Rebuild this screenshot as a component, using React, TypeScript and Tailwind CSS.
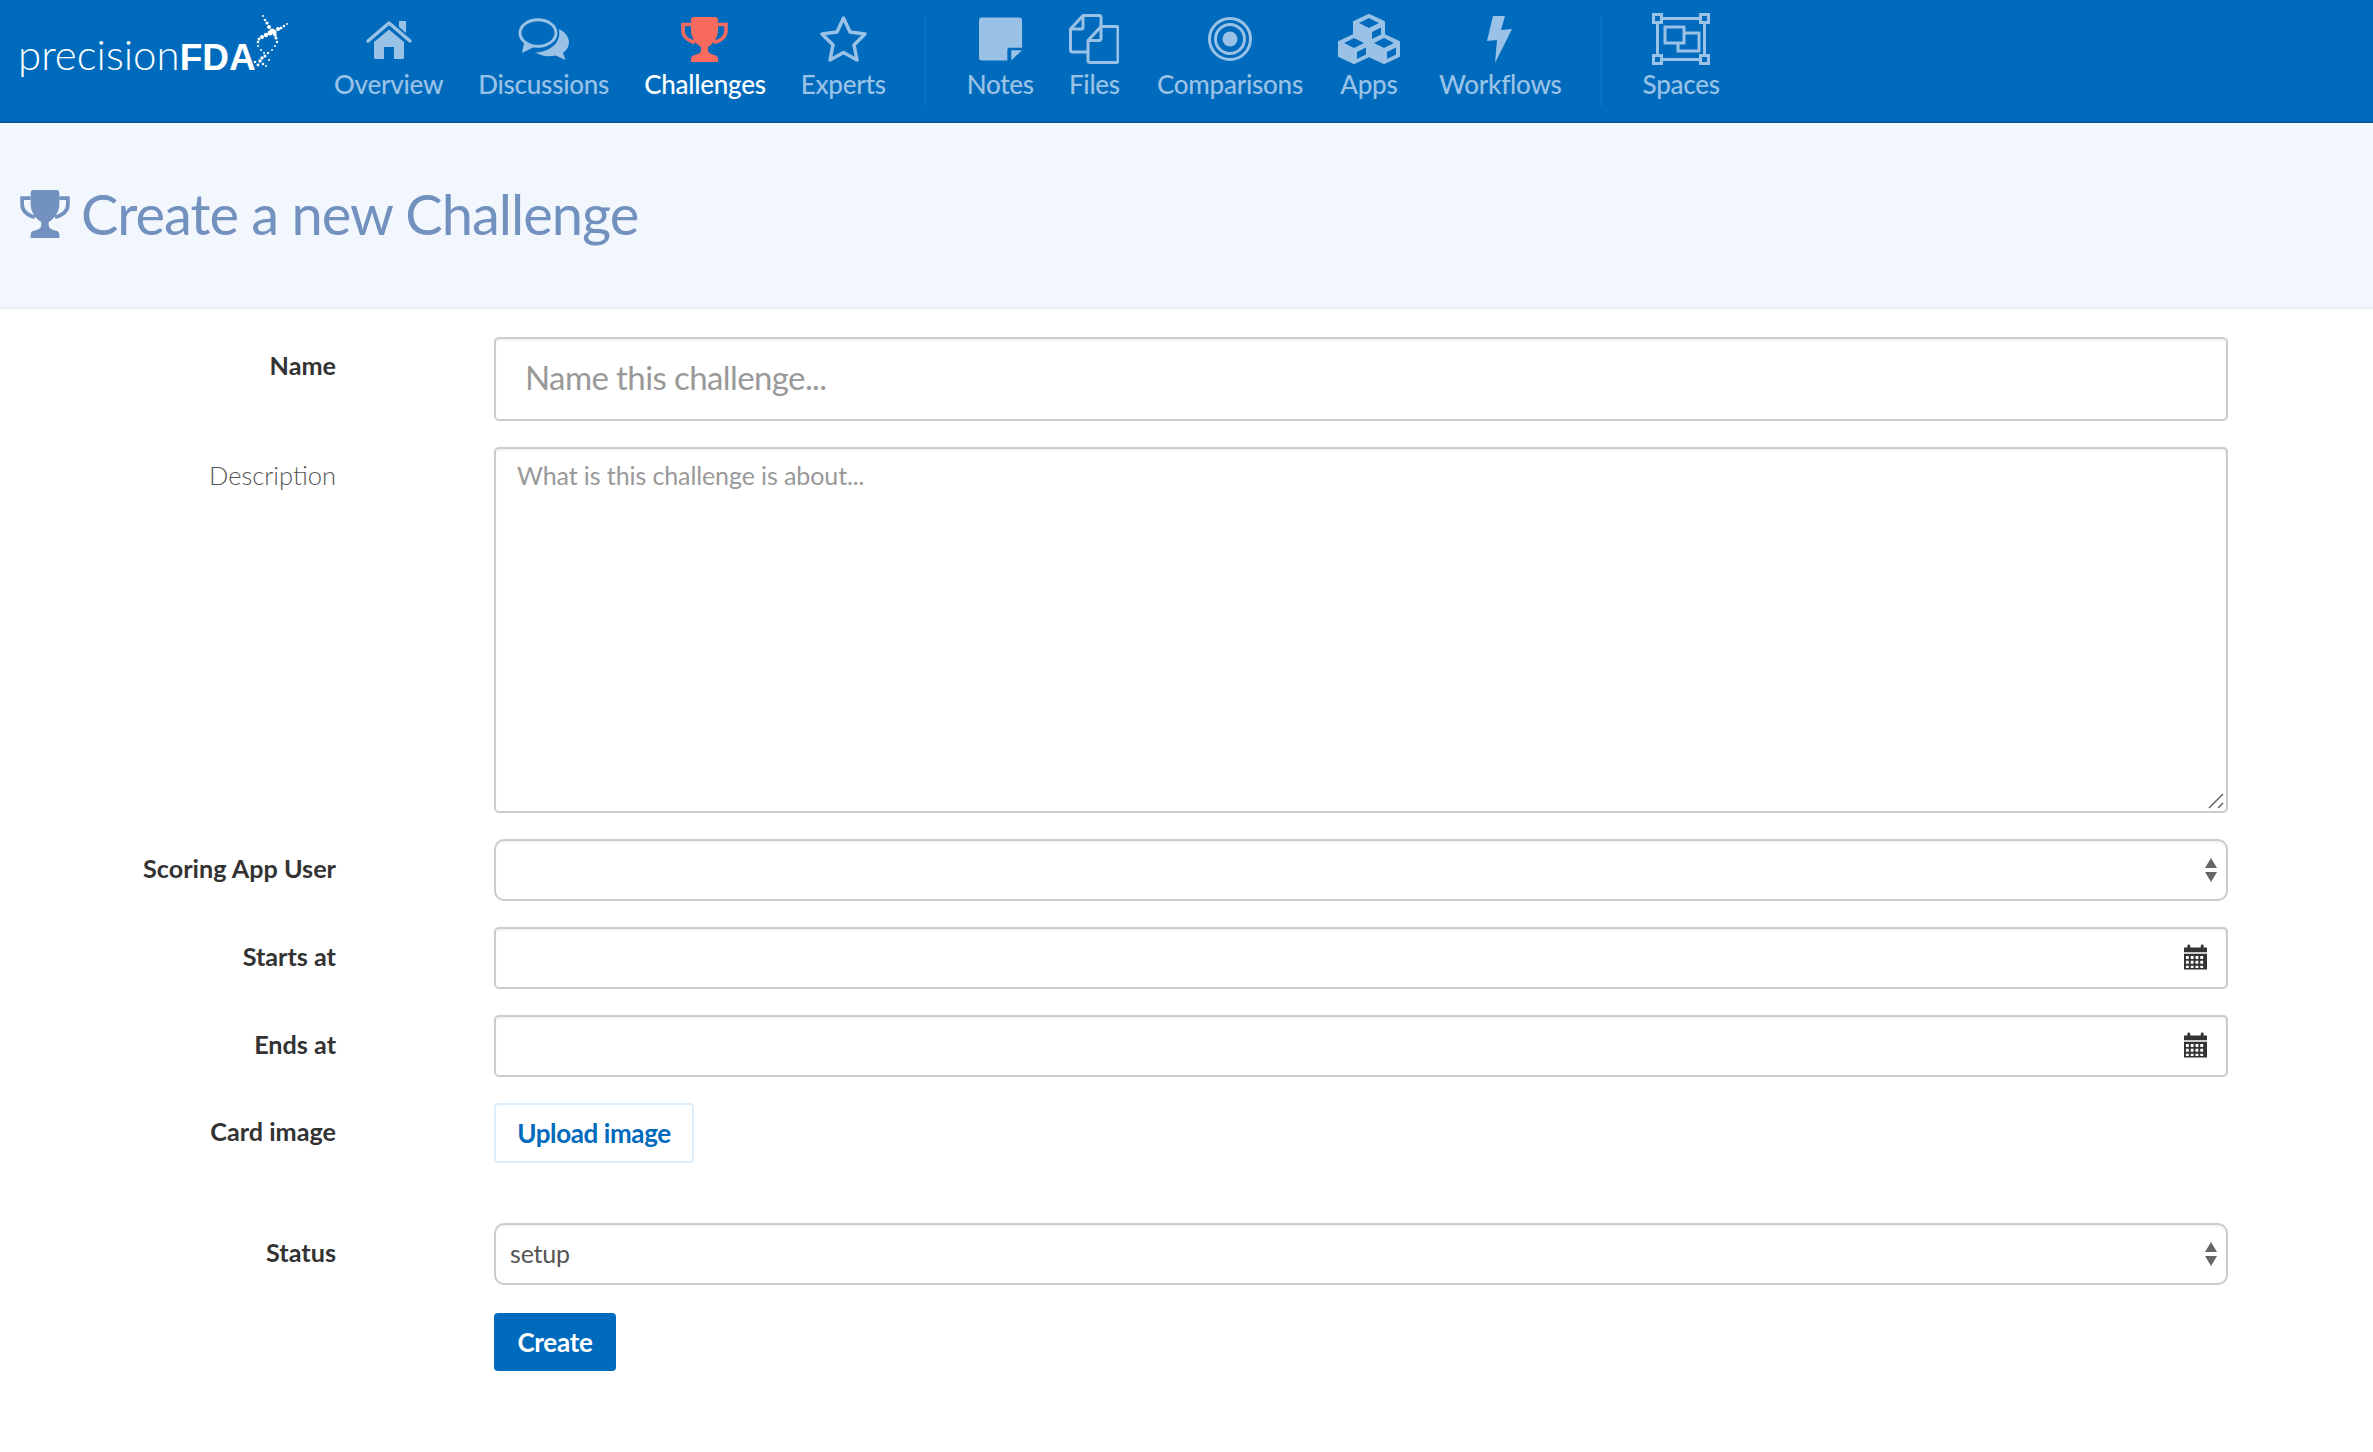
import * as React from "react";

const font = "font-['Lato','Liberation_Sans',sans-serif]";

function Home() {
  return (
    <svg viewBox="0 0 46 39" className="h-[39px] w-[46px]" fill="currentColor">
      <path d="M33 1h7v12l-7-6z" />
      <path d="M2 21 23 3l21 18" fill="none" stroke="currentColor" strokeWidth="3.500" strokeLinecap="round" strokeLinejoin="round" />
      <path d="M23 9.500 38 22v15.500a1.500 1.500 0 0 1-1.500 1.500H28V27H18v12H9.500A1.500 1.500 0 0 1 8 37.500V22z" />
    </svg>
  );
}

function Discussions() {
  return (
    <svg viewBox="0 0 51 42" className="h-[42px] w-[51px]" fill="currentColor">
      <ellipse cx="20" cy="15" rx="18" ry="13.300" fill="none" stroke="currentColor" strokeWidth="3" />
      <path d="M6 25l-2 10 12-6z" />
      <path d="M41 11c6 3 10 8 10 13 0 4-2 8-6 11l2.500 7-10-4.500c-7 1.500-15 .5-20-3 13-.5 26-8.500 23.500-23.500z" />
    </svg>
  );
}

function Trophy({ className }: { className: string }) {
  return (
    <svg viewBox="0 0 47 45" className={className} fill="currentColor">
      <path d="M13 0h21a3 3 0 0 1 3 3v10c0 8-5 14-10 17v3c0 3 3 4 6 5 3 .5 4 2 4 4v3H10v-3c0-2 1-3.500 4-4 3-1 6-2 6-5v-3C15 27 10 21 10 13V3a3 3 0 0 1 3-3z" />
      <path d="M10 7.500H2v6c0 6 5 10 12 12M37 7.500h8v6c0 6-5 10-12 12" fill="none" stroke="currentColor" strokeWidth="3.500" />
    </svg>
  );
}

function Star() {
  return (
    <svg viewBox="0 0 47 48" className="mb-[3px] h-[48px] w-[47px]" fill="none" stroke="currentColor" strokeWidth="3.500" strokeLinejoin="round">
      <path d="M23.500 4 30 18l15 2-11 11 3 15-13.500-7.500L10 46l3-15L2 20l15-2z" />
    </svg>
  );
}

function Note() {
  return (
    <svg viewBox="0 0 44 44" className="h-[44px] w-[43px]" fill="currentColor">
      <path d="M3 0h38a3 3 0 0 1 3 3v28H31a2 2 0 0 0-2 2v11H3a3 3 0 0 1-3-3V3a3 3 0 0 1 3-3z" />
      <path d="M33 33.500h11L33 44z" />
    </svg>
  );
}

function Files() {
  return (
    <svg viewBox="0 0 50 50" className="h-[50px] w-[50px]" fill="none" stroke="currentColor" strokeWidth="3" strokeLinejoin="round" strokeLinecap="round">
      <path d="M14 1.500h16a2 2 0 0 1 2 2V12M1.500 15 14 1.500V13a2 2 0 0 1-2 2H1.500v21a2 2 0 0 0 2 2H19" />
      <path d="M32 12.500h15a2 2 0 0 1 2 2V46.500a2 2 0 0 1-2 2H21a2 2 0 0 1-2-2V26.500L32 12.500V24a2 2 0 0 1-2 2.500H19" />
    </svg>
  );
}

function Target() {
  return (
    <svg viewBox="0 0 44 44" className="h-[44px] w-[44px]" fill="none" stroke="currentColor">
      <circle cx="22" cy="22" r="20.500" strokeWidth="3" />
      <circle cx="22" cy="22" r="14.500" strokeWidth="3" />
      <circle cx="22" cy="22" r="7.500" fill="currentColor" stroke="none" />
    </svg>
  );
}

function Cube({ x, y }: { x: number; y: number }) {
  return (
    <g transform={`translate(${x} ${y})`}>
      <path d="M15 0 30 7v14l-15 7-15-7V7z" fill="currentColor" stroke="currentColor" strokeWidth="2" strokeLinejoin="round" />
      <path d="M15 3l10 5-10 5-10-5z" fill="#006bbd" />
      <path d="M18 17l9-4.500v7L18 24z" fill="#006bbd" />
    </g>
  );
}

function Apps() {
  return (
    <svg viewBox="0 0 62 50" className="h-[50px] w-[62px]">
      <Cube x={16} y={1} />
      <Cube x={1} y={21} />
      <Cube x={31} y={21} />
    </svg>
  );
}

function Bolt() {
  return (
    <svg viewBox="0 0 26 47" className="h-[47px] w-[26px]" fill="currentColor">
      <path d="M6 0h12l-4 14 11-1L8 47l2-23-10 1z" />
    </svg>
  );
}

function Spaces() {
  return (
    <svg viewBox="0 0 58 52" className="h-[52px] w-[58px]" fill="none" stroke="currentColor" strokeWidth="3">
      <rect x="1.500" y="1.500" width="8" height="8" />
      <rect x="48.500" y="1.500" width="8" height="8" />
      <rect x="1.500" y="42.500" width="8" height="8" />
      <rect x="48.500" y="42.500" width="8" height="8" />
      <path d="M9.500 5.500h39M9.500 46.500h39M5.500 9.500v33M52.500 9.500v33" />
      <rect x="13" y="14" width="19" height="16" />
      <path d="M32 20h15v18H26v-8" />
    </svg>
  );
}

function Calendar() {
  return (
    <svg viewBox="0 0 24 26" className="mb-[2px] h-[26px] w-[23px]" fill="#333333">
      <path d="M0 3h3.500V1.500a1.500 1.500 0 0 1 3 0V3h11V1.500a1.500 1.500 0 0 1 3 0V3H24v5H0z" />
      <path fillRule="evenodd" d="M0 9.500h24V26H0zM2 12v3h3v-3zm5 0v3h3v-3zm5 0v3h3v-3zm5 0v3h3v-3zM2 17v3h3v-3zm5 0v3h3v-3zm5 0v3h3v-3zm5 0v3h3v-3zM2 22v2.500h3V22zm5 0v2.500h3V22zm5 0v2.500h3V22zm5 0v2.500h3V22z" />
    </svg>
  );
}

const helix = [
  [263, 16, 1], [265, 20, 1.3], [267, 23, 1.6], [269, 27, 2], [272, 31, 2.5], [275, 35, 1.8],
  [287, 24, 1], [284, 26, 1.2], [281, 28, 1.5], [278, 29, 2], [274, 32, 2.5], [270, 33, 2.5], [266, 35, 2.2], [262, 37, 2], [259, 39, 1.5], [258, 42, 1.3],
  [276, 38, 1.5], [277, 42, 1.2], [275, 46, 1], [272, 50, 1], [268, 53, 1.2], [265, 56, 1.5], [262, 58, 1.7], [260, 61, 1.7], [258, 65, 1.4], [263, 64, 1.3], [266, 66, 1],
  [258, 46, 1], [261, 50, 1], [264, 53, 1], [269, 60, 1], [255, 62, 1.2],
];

function Logo() {
  return (
    <div className="relative h-[121px] w-[290px] shrink-0">
      <span className="absolute top-[29px] left-[18px] flex items-baseline text-white">
        <span className="text-[42px] leading-[50px] font-light">precision</span>
        <span className="font-['Liberation_Sans',sans-serif] text-[37px] leading-[50px] font-bold">FDA</span>
      </span>
      <svg viewBox="250 10 40 60" className="absolute top-[10px] left-[250px] h-[60px] w-[40px]" fill="white">
        {helix.map(([cx, cy, r], i) => (
          <circle key={i} cx={cx} cy={cy} r={r} />
        ))}
      </svg>
    </div>
  );
}

function NavItem({ icon, label, active, className = "" }: { icon: React.ReactNode; label: string; active?: boolean; className?: string }) {
  return (
    <div className={`flex flex-col items-center px-[17.500px] ${active ? "text-white" : "text-[#99c2e6]"} ${className}`}>
      <div className={`flex h-[52px] items-center justify-center ${active ? "text-[#f96a5f]" : ""}`}>{icon}</div>
      <span className="mt-[3px] text-[26px] leading-[32px] font-medium tracking-[-0.25px]">{label}</span>
    </div>
  );
}

function Divider({ className }: { className: string }) {
  return <div className={`mt-[3px] h-[90px] w-[2px] bg-[#0a73c4] ${className}`} />;
}

function Label({ children, className }: { children: React.ReactNode; className: string }) {
  return <div className={`w-[336px] shrink-0 text-right leading-[34px] ${className}`}>{children}</div>;
}

function Arrows() {
  return (
    <svg viewBox="0 0 12 24" className="h-[24px] w-[12px]" fill="#666666">
      <path d="M6 0l6 10H0zM0 14h12L6 24z" />
    </svg>
  );
}

const boldLabel = "pb-[5px] text-[25.200px] font-bold text-[#333333]";
const boxClass = "ml-[158px] flex h-[62px] w-[1734px] items-center justify-between border-2 border-[#cccccc] bg-white shadow-[inset_0_2px_2px_rgba(0,0,0,0.05)]";

export default function App() {
  return (
    <div className={`min-h-[1452px] bg-white ${font}`}>
      <header className="flex h-[123px] items-start border-b-2 border-[#005a9e] bg-[#006bbd]">
        <Logo />
        <nav className="ml-[26.500px] flex items-start pt-[13px]">
          <NavItem icon={<Home />} label="Overview" />
          <NavItem icon={<Discussions />} label="Discussions" />
          <NavItem icon={<Trophy className="h-[45px] w-[47px]" />} label="Challenges" active />
          <NavItem icon={<Star />} label="Experts" />
          <Divider className="mr-[23px] ml-[21px]" />
          <NavItem icon={<Note />} label="Notes" />
          <NavItem icon={<Files />} label="Files" />
          <NavItem icon={<Target />} label="Comparisons" className="ml-[2px]" />
          <NavItem icon={<Apps />} label="Apps" className="mr-[4px]" />
          <NavItem icon={<Bolt />} label="Workflows" />
          <Divider className="mr-[23px] ml-[21px]" />
          <NavItem icon={<Spaces />} label="Spaces" />
        </nav>
      </header>

      <div className="flex h-[186px] items-center gap-[11px] border-b-2 border-[#e8f0fb] bg-[#f2f7fe] pb-[2px] pl-[20px] text-[#7291bf]">
        <Trophy className="h-[48px] w-[50px]" />
        <h1 className="text-[56px] leading-[70px] font-normal tracking-[-1px]">Create a new Challenge</h1>
      </div>

      <form className="flex flex-col pt-[28px] text-[#555555]">
        <div className="flex">
          <Label className="pt-[11px] text-[25.200px] font-bold text-[#333333]">Name</Label>
          <div className="ml-[158px] flex h-[84px] w-[1734px] items-center rounded-[5px] border-2 border-[#cccccc] bg-white pb-[2px] pl-[29px] text-[33px] tracking-[-0.6px] text-[#999999] shadow-[inset_0_2px_2px_rgba(0,0,0,0.05)]">
            Name this challenge...
          </div>
        </div>

        <div className="mt-[26px] flex">
          <Label className="pt-[11px] text-[25.500px] font-light text-[#555555]">Description</Label>
          <div className="relative ml-[158px] h-[366px] w-[1734px] rounded-[5px] border-2 border-[#cccccc] bg-white pt-[9px] pl-[21px] text-[25px] leading-[34px] tracking-[-0.1px] text-[#999999] shadow-[inset_0_2px_2px_rgba(0,0,0,0.05)]">
            What is this challenge is about...
            <svg viewBox="0 0 16 16" className="absolute right-[2px] bottom-[2px] h-[16px] w-[16px]" stroke="#666666" strokeWidth="1.500">
              <path d="M1 15 15 1M10 15l5-5" />
            </svg>
          </div>
        </div>

        <div className="mt-[26px] flex items-center">
          <Label className={boldLabel}>Scoring App User</Label>
          <div className={`${boxClass} rounded-[10px] pr-[9px]`}>
            <span />
            <Arrows />
          </div>
        </div>

        <div className="mt-[26px] flex items-center">
          <Label className={boldLabel}>Starts at</Label>
          <div className={`${boxClass} rounded-[5px] pr-[19px]`}>
            <span />
            <Calendar />
          </div>
        </div>

        <div className="mt-[26px] flex items-center">
          <Label className={boldLabel}>Ends at</Label>
          <div className={`${boxClass} rounded-[5px] pr-[19px]`}>
            <span />
            <Calendar />
          </div>
        </div>

        <div className="mt-[26px] flex items-center">
          <Label className={boldLabel}>Card image</Label>
          <div className="ml-[158px] flex h-[60px] w-[200px] items-center justify-center rounded-[4px] border-2 border-[#ddeefc] bg-white text-[26px] font-bold tracking-[-0.4px] text-[#006bbd]">
            Upload image
          </div>
        </div>

        <div className="mt-[60px] flex items-center">
          <Label className={boldLabel}>Status</Label>
          <div className={`${boxClass} rounded-[10px] pr-[9px] pl-[14px] text-[25px] tracking-[-0.2px] text-[#555555]`}>
            <span>setup</span>
            <Arrows />
          </div>
        </div>

        <div className="mt-[28px] ml-[494px] flex">
          <div className="flex h-[58px] w-[122px] items-center justify-center rounded-[4px] bg-[#006bbd] text-[26px] font-bold tracking-[-0.3px] text-white">
            Create
          </div>
        </div>
      </form>
    </div>
  );
}
